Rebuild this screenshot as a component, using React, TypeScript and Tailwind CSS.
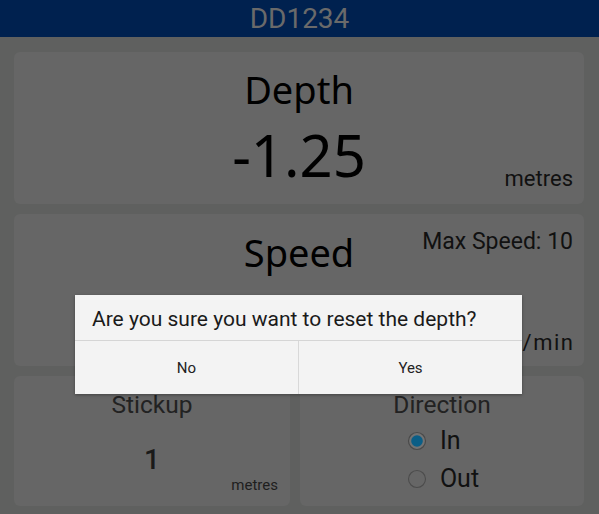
import React from 'react';

const roboto = { fontFamily: 'Roboto, "Liberation Sans", sans-serif' };
const droid = { fontFamily: '"Noto Sans", "Open Sans", sans-serif' };

const RadioDot: React.FC<{ checked?: boolean }> = ({ checked }) => (
    <svg width="20" height="20" viewBox="0 0 20 20" className="shrink-0">
        {checked ? (
            <>
                <circle cx="10" cy="10" r="8.5" fill="#737373" stroke="#4a4a4a" strokeWidth="1.2" />
                <circle cx="10" cy="10" r="5.8" fill="#0b5e86" />
            </>
        ) : (
            <circle cx="10" cy="10" r="8.5" fill="none" stroke="#4c4c4c" strokeWidth="1.1" />
        )}
    </svg>
);

const App: React.FC = () => {
    return (
        <div className="relative w-[599px] h-[514px] overflow-hidden bg-[#5f605f]" style={roboto}>
            {/* title bar */}
            <div className="h-[37px] bg-[#00214f] flex items-center justify-center">
                <span className="text-[28px] leading-none text-[#6a6a6a]">DD1234</span>
            </div>

            <div className="pl-[14px] pr-[15px] pt-[15px] flex flex-col gap-[10px]">
                {/* Depth */}
                <div className="h-[152px] rounded-[6px] bg-[#666666] pt-[18px] flex flex-col">
                    <div className="text-center text-[38px] leading-[38px] text-black" style={droid}>
                        Depth
                    </div>
                    <div className="grid grid-cols-[1fr_auto_1fr] items-end mt-[17.6px]">
                        <div />
                        <div className="text-[58px] leading-[58px] text-black" style={droid}>
                            -1.25
                        </div>
                        <div className="justify-self-end pr-[11px] text-[22px] leading-[22px] text-[#111] mb-[-6.5px]">
                            metres
                        </div>
                    </div>
                </div>

                {/* Speed */}
                <div className="h-[152px] rounded-[6px] bg-[#666666] pt-[16px] flex flex-col">
                    <div className="grid grid-cols-[1fr_auto_1fr] items-start">
                        <div />
                        <div className="text-[38px] leading-[38px] text-black mt-[2.5px]" style={droid}>
                            Speed
                        </div>
                        <div className="justify-self-end pr-[11px] text-[23px] leading-[23px] text-[#111]">
                            Max Speed: 10
                        </div>
                    </div>
                    <div className="grid grid-cols-[1fr_auto_1fr] items-end mt-[17.5px]">
                        <div />
                        <div className="text-[58px] leading-[58px] text-black" style={droid}>
                            0.00
                        </div>
                        <div className="justify-self-end pr-[9.5px] text-[22px] leading-[22px] tracking-[1.5px] text-[#111] mb-[-8px]">
                            m/min
                        </div>
                    </div>
                </div>

                {/* Stickup / Direction */}
                <div className="grid grid-cols-[276px_1fr] gap-[10px] h-[130px]">
                    <div className="rounded-[6px] bg-[#666666] pt-[17px] flex flex-col items-center">
                        <div className="text-[24.5px] leading-[24px] text-[#222]">Stickup</div>
                        <div className="mt-[28.5px] text-[28px] leading-[28px] font-medium text-[#1a1a1a]">1</div>
                        <div className="self-end mt-[4.5px] pr-[12px] text-[15px] leading-[15px] text-[#1e1e1e]">metres</div>
                    </div>
                    <div className="rounded-[6px] bg-[#666666] pt-[17px] flex flex-col items-center">
                        <div className="text-[24.5px] leading-[24px] text-[#222]">Direction</div>
                        <div className="mt-[12px] flex flex-col gap-[14px] pl-[2px]">
                            <div className="flex items-center gap-[13px] h-[24px]">
                                <RadioDot checked />
                                <span className="text-[25px] leading-[24px] text-[#111]">In</span>
                            </div>
                            <div className="flex items-center gap-[13px] h-[24px]">
                                <RadioDot />
                                <span className="text-[25px] leading-[24px] text-[#111]">Out</span>
                            </div>
                        </div>
                    </div>
                </div>
            </div>

            {/* confirm dialog */}
            <div className="absolute inset-0 flex justify-start pt-[295px] pl-[75px]">
                <div className="w-[447px] h-[99px] bg-[#f3f3f3] shadow-[0_1px_3px_rgba(0,0,0,0.35)] flex flex-col">
                    <div className="h-[45px] pl-[17px] pt-[14px] text-[21px] leading-[21px] text-[#1a1a1a]">
                        Are you sure you want to reset the depth?
                    </div>
                    <div className="h-px bg-[#d5d5d5]" />
                    <div className="flex-1 grid grid-cols-[223px_1px_1fr]">
                        <button className="flex items-center justify-center pt-[2px] text-[15px] text-[#222]">No</button>
                        <div className="bg-[#d8d8d8]" />
                        <button className="flex items-center justify-center pt-[2px] text-[15px] text-[#222]">Yes</button>
                    </div>
                </div>
            </div>
        </div>
    );
};

export default App;
